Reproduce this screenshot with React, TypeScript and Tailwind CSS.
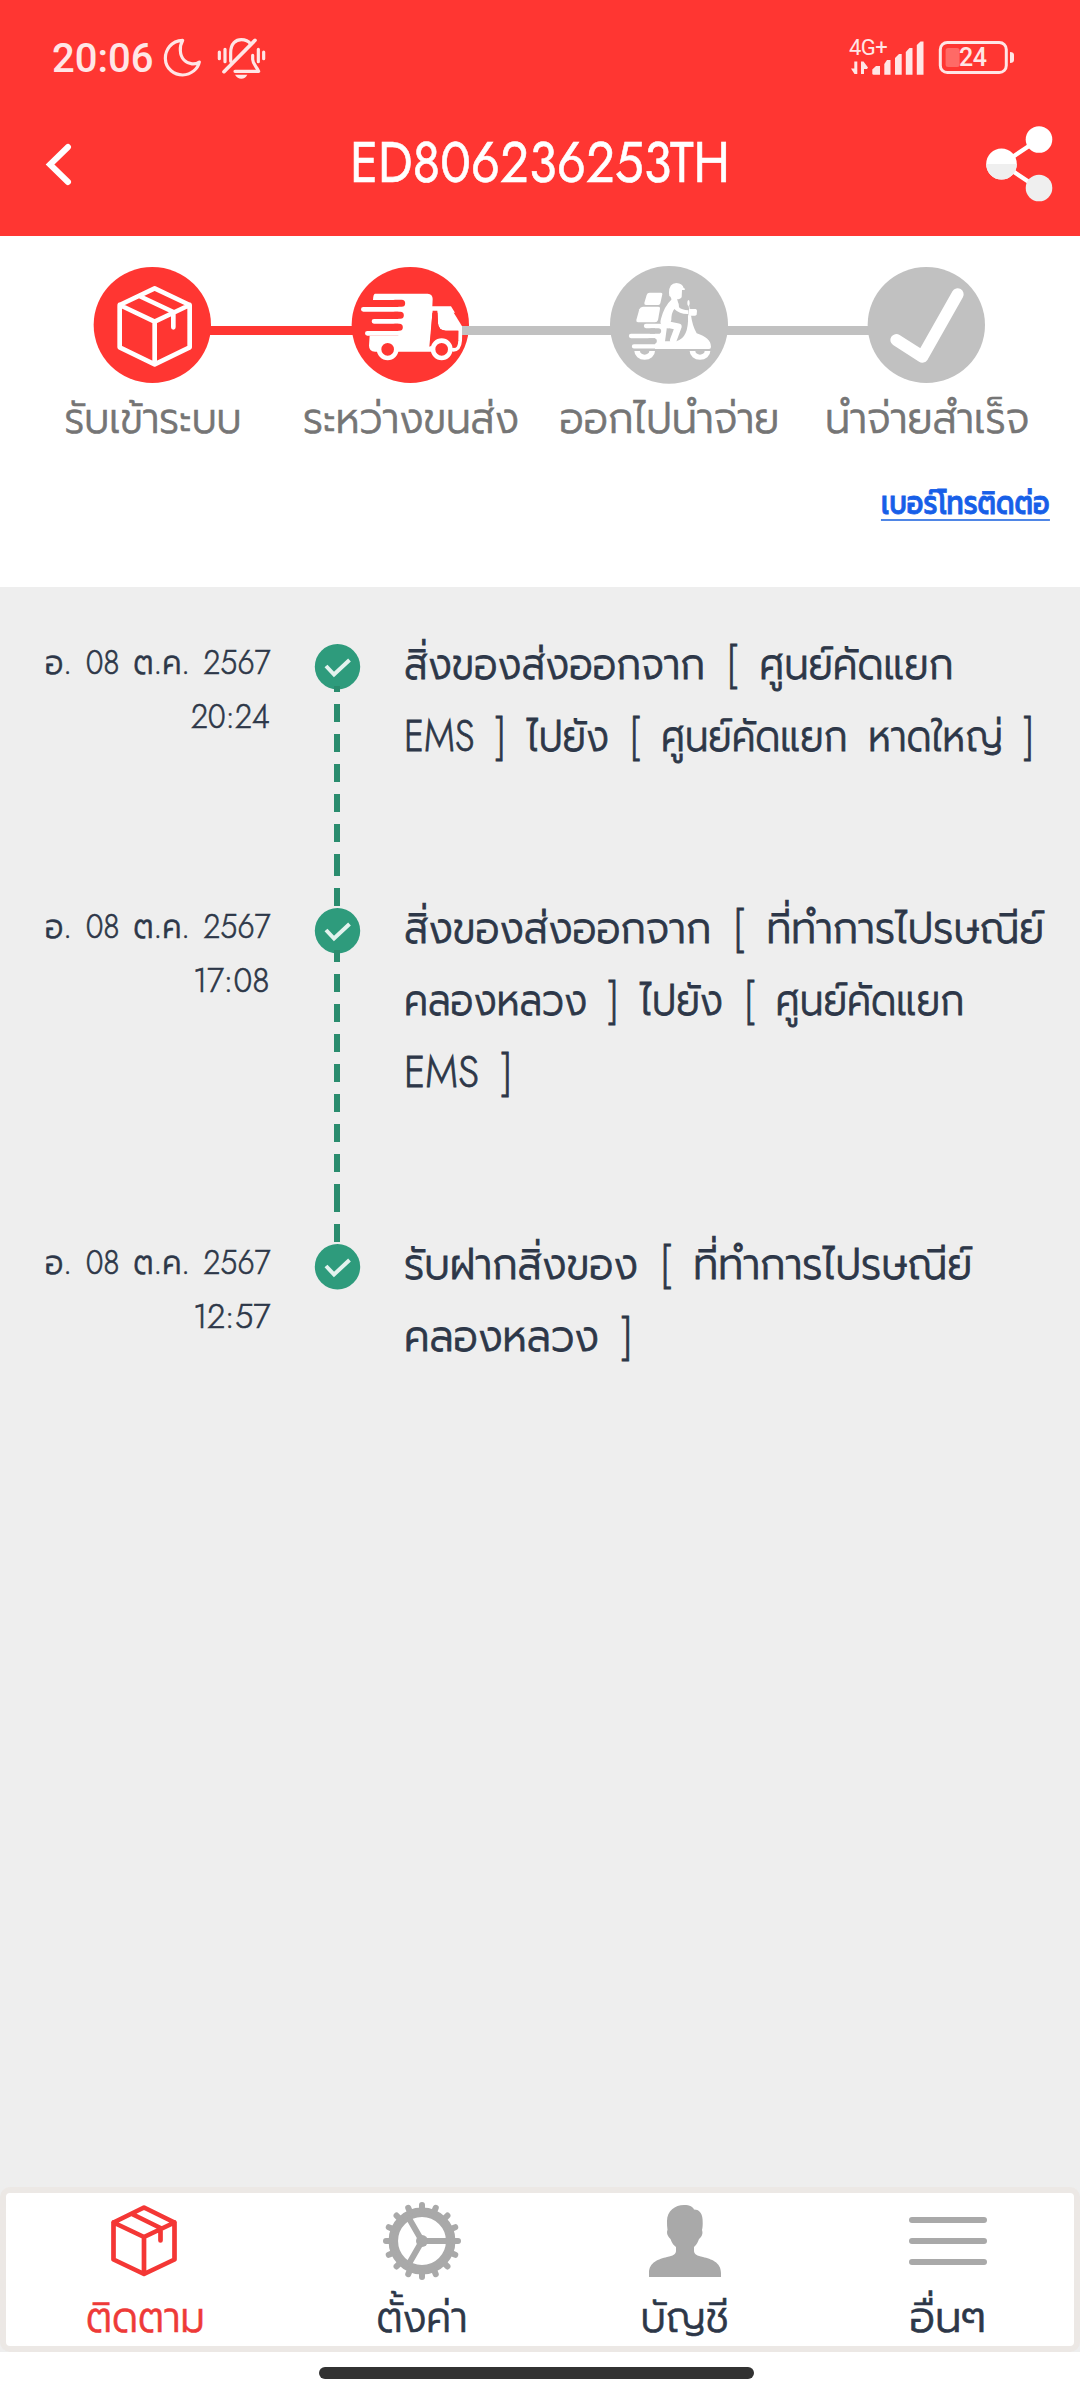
import { useLayoutEffect, useRef, useState, type ReactNode } from 'react'
import { clsx } from 'clsx'

const font = "font-['Jost','Prompt','Lato','Noto_Sans',sans-serif]"

type Align = 'left' | 'center' | 'right'

// Squeezes or stretches one line of text to the given width.
function Fit({ width, align = 'center', className, children }: {
  width: number
  align?: Align
  className?: string
  children: ReactNode
}) {
  const ref = useRef<HTMLSpanElement>(null)
  const [scale, setScale] = useState(1)

  useLayoutEffect(() => {
    if (ref.current) setScale(width / ref.current.offsetWidth)
  }, [width])

  return (
    <span
      ref={ref}
      className={clsx(
        'inline-block whitespace-nowrap',
        align === 'left' && 'origin-left',
        align === 'center' && 'origin-center',
        align === 'right' && 'origin-right',
        className,
      )}
      style={{ transform: `scaleX(${scale})` }}>
      {children}
    </span>
  )
}

function StatusIcons() {
  return (
    <svg viewBox="0 0 390 180" className="mt-[30px] h-[60px] w-[130px]" fill="none" stroke="#ffe6e6" strokeWidth="9.500" strokeLinecap="round" strokeLinejoin="round">
      <path d="M98 31C62 32 46 62 46 85C47 118 74 135 98 135C124 134 144 116 148 96C136 105 116 104 102 90C88 76 88 48 98 31Z" />
      <path d="M222 125L315 31" strokeWidth="11" />
      <path d="M242 94V68C242 40 258 29 274 29C287 29 296 34 302 42" />
      <path d="M308 76V88C309 104 320 110 326 124H255" />
      <path d="M255 134H292Q286 146 274 146Q262 146 255 134Z" fill="#ffe6e6" stroke="none" />
      <path d="M208 66V86M225 58V95M325 58V95M341 66V86" />
    </svg>
  )
}

function SignalAndBattery() {
  return (
    <div className="relative mt-[30px] h-[60px] w-[175px] font-['Roboto',sans-serif] text-[#ffe6e6]">
      <svg viewBox="0 0 175 60" className="h-[60px] w-[175px]" fill="#ffe6e6">
        <path d="M12.3 31.5v12.5h-2.8l-3.500-5.500h3.300v-7z" />
        <path d="M16 31.500h2.500l4.500 6-1 1.500h-3v5h-3z" />
        <path d="M27.300 39.500L31 36h4v8.700h-6.200q-1.500 0-1.500-1.500z" />
        <path d="M39.300 34L42 30h3.500v14.700h-6.200z" />
        <path d="M50 28L54 24h2.700v20.700H50z" />
        <path d="M60.800 22L64.500 18h3v26.700h-6.700z" />
        <path d="M71.800 15L75.500 11.500h3v33.200h-6.700z" />
        <rect x="95.300" y="12.500" width="66" height="30" rx="7" fill="none" stroke="#ffe6e6" strokeWidth="3" />
        <rect x="100.600" y="18" width="14" height="19" rx="2.500" fill="#ff6a66" />
        <path d="M165 22q4 0 4 3v5q0 3-4 3z" />
      </svg>
      <span className="absolute top-[6px] left-[4px] text-[22px] leading-[24px] tracking-[-0.5px]">4G+</span>
      <span className="absolute top-[15px] left-[114px] text-[25px] leading-[26px] font-medium tracking-[-0.5px]">24</span>
    </div>
  )
}

function Share() {
  return (
    <svg viewBox="0 0 70 80" className="h-[80px] w-[70px]">
      <defs>
        <clipPath id="lower"><rect x="0" y="40" width="70" height="40" /></clipPath>
      </defs>
      <path d="M18 40L54 16M18 40L54 64" stroke="#fff" strokeWidth="4.500" />
      <g fill="#fff">
        <ellipse cx="17.500" cy="40" rx="15.300" ry="15.500" />
        <circle cx="55" cy="15.500" r="13.300" />
      </g>
      <g fill="#efefef" clipPath="url(#lower)">
        <ellipse cx="17.500" cy="40" rx="15.300" ry="15.500" />
        <circle cx="55" cy="64" r="13.300" />
      </g>
    </svg>
  )
}

function Header() {
  return (
    <header className="h-[236px] bg-[#ff3632]">
      <div className="flex h-[117px] items-start">
        <span className="ml-[52px] w-[98px] pt-[38px] font-['Roboto',sans-serif] text-[40px] leading-[42px] font-medium whitespace-nowrap text-[#ffe6e6]">20:06</span>
        <StatusIcons />
        <div className="flex-1" />
        <SignalAndBattery />
        <div className="w-[60px]" />
      </div>
      <div className="grid h-[93px] grid-cols-[1fr_auto_1fr] items-center">
        <svg viewBox="0 0 30 44" className="ml-[44px] h-[44px] w-[30px]" fill="none" stroke="#fff" strokeWidth="6" strokeLinecap="round">
          <path d="M24 5L6 22.500L24 40" />
        </svg>
        <Fit width={380} className={clsx(font, 'pb-[4px] text-[57px] leading-[60px] text-white [-webkit-text-stroke:0.6px]')}>ED806236253TH</Fit>
        <div className="mr-[26px] flex justify-end"><Share /></div>
      </div>
    </header>
  )
}

const boxPath = 'M200 85L305 135V262L200 313L95 262V135ZM95 135L200 185L305 135M200 185V313M154 108L256 156V202'

function ParcelStep() {
  return (
    <svg viewBox="0 0 390 390" className="size-[130px]">
      <ellipse cx="193" cy="195" rx="176" ry="174" fill="#ff3632" />
      <path d={boxPath} fill="none" stroke="#fff" strokeWidth="14" strokeLinejoin="round" strokeLinecap="round" />
    </svg>
  )
}

function TruckStep() {
  return (
    <svg viewBox="3 0 390 390" className="size-[130px]">
      <ellipse cx="196" cy="195" rx="176" ry="174" fill="#ff3632" />
      <g fill="#fff">
        <path d="M90 101H248Q263 102 263 117L262 139H318L330 158H262L256 250Q258 262 262 262V275H90Q72 273 72 257L74 227H160V120H84Q85 101 90 101Z" />
        <path d="M277 145H318L352 200V212H302Q280 211 279 190Z" />
      </g>
      <g fill="none" stroke="#fff" strokeLinecap="round">
        <path d="M55 148H165M87 184H165M67 220H165" strokeWidth="14" />
        <path d="M346 205L345 242Q343 269 325 269" strokeWidth="12" />
      </g>
      <path d="M150 130H170M150 165.500H166M150 201.500H163" stroke="#ff3632" strokeWidth="21" strokeLinecap="round" />
      <path d="M263 152H277L279 190Q280 211 302 212H340V240Q339 262 330 264L322 262A33 33 0 0 0 258 258L253 260Z" fill="#ff3632" />
      <g fill="#ff3632" stroke="#fff" strokeWidth="14">
        <circle cx="128" cy="268" r="26" />
        <circle cx="290" cy="268" r="26" />
      </g>
    </svg>
  )
}

function RiderStep() {
  return (
    <svg viewBox="-3 0 390 390" className="size-[130px]">
      <ellipse cx="192" cy="194.500" rx="177" ry="176.500" fill="#c1c1c1" />
      <g fill="#fff">
        <path d="M192 98Q192 70 214 69Q233 70 236 84L240 86L239 90H231L230 112Q226 119 217 117V126H199Q201 112 193 108Z" />
        <path d="M134 98H168Q173 98 172 103L166 130Q165 135 160 135H123Q117 135 118 129L125 105Q127 98 134 98Z" />
        <path d="M114 140H160Q166 140 165 146L159 180Q157 187 150 187H99Q93 187 94 180L103 148Q106 140 114 140Z" />
        <path d="M199 119H216Q222 130 222 142Q230 150 250 151V162Q224 163 208 147Q199 158 199 180L190 206L170 196Q164 190 168 176Q178 138 199 119Z" />
        <path d="M252 147H272Q276 148 276 153L275 163Q274 167 270 167H250Z" />
        <ellipse cx="250.500" cy="129" rx="3.500" ry="9" />
        <path d="M160 192L186 200L180 244H214Q252 234 249 166H258Q262 198 275 220Q317 233 318 260Q318 267 312 267H150V192Z" />
        <path d="M88 273A31 26 0 0 0 150 273H133A14 11 0 0 1 105 273Z" />
        <path d="M254 273A31 26 0 0 0 316 273H299A14 11 0 0 1 271 273Z" />
      </g>
      <g fill="none" stroke="#fff" strokeLinecap="round" strokeLinejoin="round">
        <path d="M180 192L220 200L205 240" strokeWidth="20" />
        <path d="M123 198H165M78 228H165M87 259H165" strokeWidth="13" />
        <path d="M251 136L255 150" strokeWidth="2" />
      </g>
      <path d="M140 213H160M135 243H147" stroke="#c1c1c1" strokeWidth="17" strokeLinecap="round" />
    </svg>
  )
}

function DoneStep() {
  return (
    <svg viewBox="0 0 390 390" className="size-[130px]">
      <ellipse cx="193" cy="195" rx="176" ry="174" fill="#c1c1c1" />
      <path d="M103 240L181 290L287 103" fill="none" stroke="#fff" strokeWidth="36" strokeLinecap="round" strokeLinejoin="round" />
    </svg>
  )
}

const steps = [
  { label: 'รับเข้าระบบ', width: 177, icon: <ParcelStep />, line: 'bg-[#ff3632]' },
  { label: 'ระหว่างขนส่ง', width: 216, icon: <TruckStep />, line: 'bg-[#c1c1c1]' },
  { label: 'ออกไปนำจ่าย', width: 220, icon: <RiderStep />, line: 'bg-[#c1c1c1]' },
  { label: 'นำจ่ายสำเร็จ', width: 204, icon: <DoneStep />, line: null },
]

function Progress() {
  return (
    <section className="h-[351px] bg-white">
      <div className="flex px-6 pt-6">
        {steps.map(s => (
          <div key={s.label} className="relative flex w-[258px] flex-col items-center">
            <div className="relative">{s.icon}</div>
            {s.line && <div className={clsx('absolute top-[66px] left-[180px] h-[9px] w-[207px]', s.line)} />}
            <Fit width={s.width} className={clsx(font, 'text-[43px] leading-[57px] font-light text-[#757575] [-webkit-text-stroke:0.7px]')}>{s.label}</Fit>
          </div>
        ))}
      </div>
      <div className="mt-[40px] flex justify-end pr-[30px]">
        <Fit width={169} align="right" className={clsx(font, 'border-b-2 border-[#4f86e6] text-[32px] leading-[32px] font-medium text-[#175fe8] [-webkit-text-stroke:0.8px]')}>
          เบอร์โทรติดต่อ
        </Fit>
      </div>
    </section>
  )
}

const events = [
  {
    date: 'อ. 08 ต.ค. 2567',
    time: '20:24',
    row: 'h-[264px]',
    lines: [
      { text: 'สิ่งของส่งออกจาก [ ศูนย์คัดแยก', width: 549 },
      { text: 'EMS ] ไปยัง [ ศูนย์คัดแยก หาดใหญ่ ]', width: 630 },
    ],
    dashes: ['h-[6px]', 'h-[18px]', 'h-[18px]', 'h-[18px]', 'h-[18px]', 'h-[18px]', 'h-[22px]', 'h-[18px]'],
  },
  {
    date: 'อ. 08 ต.ค. 2567',
    time: '17:08',
    row: 'h-[336px]',
    lines: [
      { text: 'สิ่งของส่งออกจาก [ ที่ทำการไปรษณีย์', width: 640 },
      { text: 'คลองหลวง ] ไปยัง [ ศูนย์คัดแยก', width: 560 },
      { text: 'EMS ]', width: 108 },
    ],
    dashes: ['h-[12px]', 'h-[18px]', 'h-[18px]', 'h-[18px]', 'h-[18px]', 'h-[18px]', 'h-[18px]', 'h-[18px]', 'h-[28px]', 'h-[18px]'],
  },
  {
    date: 'อ. 08 ต.ค. 2567',
    time: '12:57',
    row: 'h-[336px]',
    lines: [
      { text: 'รับฝากสิ่งของ [ ที่ทำการไปรษณีย์', width: 568 },
      { text: 'คลองหลวง ]', width: 229 },
    ],
    dashes: [],
  },
]

function Timeline() {
  return (
    <section className="h-[1600px] bg-[#eeeeee] pt-[57px]">
      {events.map(e => (
        <div key={e.time} className={clsx('flex items-start text-[#2d3748]', font, e.row)}>
          <div className="-mt-[8px] flex w-[270px] shrink-0 flex-col items-end text-[34px] leading-[54px] font-light [-webkit-text-stroke:0.6px]">
            <Fit width={225} align="right" className="[word-spacing:5px]">{e.date}</Fit>
            <Fit width={e.time === '20:24' ? 79 : 77} align="right">{e.time}</Fit>
          </div>
          <div className="relative ml-[44px] h-[46px] w-[47px] shrink-0">
            <svg viewBox="0 0 47 46" className="h-[46px] w-[47px]">
              <circle cx="23.500" cy="22.700" r="22.700" fill="#2e9b7c" />
              <path d="M12 22L20 30.500L35.500 16" fill="none" stroke="#e3f2ee" strokeWidth="4" />
            </svg>
            <div className="absolute top-[42px] left-[20px] flex flex-col gap-[12px]">
              {e.dashes.map((h, i) => (
                <div key={i} className={clsx('w-[6px] bg-[#2a8c6e]', h)} />
              ))}
            </div>
          </div>
          <div className="-mt-[16px] ml-[43px] flex shrink-0 flex-col items-start text-[44px] leading-[72px]">
            {e.lines.map(l => (
              <Fit key={l.text} width={l.width} align="left" className="font-light [word-spacing:11px] [-webkit-text-stroke:0.8px]">{l.text}</Fit>
            ))}
          </div>
        </div>
      ))}
    </section>
  )
}

const teeth = Array.from({ length: 16 }, (_, i) => i * 22.5)

function Gear() {
  return (
    <svg viewBox="-40 -40 80 80" className="size-[80px]" fill="none" stroke="#a9a9a9">
      <circle r="28.700" strokeWidth="9.500" />
      {teeth.map(a => (
        <path key={a} d="M31 0H36" strokeWidth="6" strokeLinecap="round" transform={`rotate(${a})`} />
      ))}
      <path d="M0 0H27M0 0L-13.500 -23.400M0 0L-13.500 23.400" strokeWidth="6" />
      <circle r="6" fill="#a9a9a9" stroke="none" />
    </svg>
  )
}

function Parcel() {
  return (
    <svg viewBox="0 0 66 72" className="mr-[2px] h-[72px] w-[66px]" fill="none" stroke="#f43735" strokeWidth="4.700" strokeLinecap="round" strokeLinejoin="round">
      <path d="M33 2.500L63.500 17.500V54.500L33 69L2.500 54.500V17.500ZM2.500 17.500L33 32L63.500 17.500M33 32V69M21 9L49.500 23V35.500" />
    </svg>
  )
}

function Person() {
  return (
    <svg viewBox="0 0 72 72" className="size-[72px]" fill="#a9a9a9">
      <path d="M0 72V68C0 57 10 54 18 52C24 51 27 49 27 46V42C23 39 22 35 21.500 34C18 31 17.500 27 18.500 25C18 22 18 19 18 16C18 6 26 0 35 0C41 0 44 2 45 4.500C51 4.500 54 9 53.700 18C53.700 21 53.500 23 53 25C54 28 53.500 31 50 34C49 37 48 39 45 42V46C45 49 48 51 54 52C62 54 72 57 72 68V72Z" />
    </svg>
  )
}

function Menu() {
  return (
    <div className="flex flex-col gap-[15px]">
      <div className="h-[6px] w-[78px] rounded-full bg-[#a9a9a9]" />
      <div className="h-[6px] w-[78px] rounded-full bg-[#a9a9a9]" />
      <div className="h-[6px] w-[78px] rounded-full bg-[#a9a9a9]" />
    </div>
  )
}

const tabs = [
  { label: 'ติดตาม', width: 119, icon: <Parcel />, cell: 'text-[#ee3a38]' },
  { label: 'ตั้งค่า', width: 91, icon: <Gear />, cell: 'text-[#2d3748]' },
  { label: 'บัญชี', width: 88, icon: <Person />, cell: 'text-[#2d3748]' },
  { label: 'อื่นๆ', width: 77, icon: <Menu />, cell: 'pl-[11px] text-[#2d3748]' },
]

function TabBar() {
  return (
    <div className="bg-[#eeeeee]">
      <nav className="grid h-[165px] grid-cols-[278px_276px_250px_264px] rounded-[10px] border-[6px] border-[#ece8e5] bg-white">
        {tabs.map(t => (
          <div key={t.label} className={clsx('flex flex-col items-center', t.cell)}>
            <div className="flex h-[96px] items-center">{t.icon}</div>
            <Fit width={t.width} className={clsx(font, 'text-[43px] leading-[57px] font-light [-webkit-text-stroke:0.7px]')}>{t.label}</Fit>
          </div>
        ))}
      </nav>
    </div>
  )
}

export default function App() {
  return (
    <div className="h-[2400px] w-[1080px] overflow-hidden bg-white">
      <Header />
      <Progress />
      <Timeline />
      <TabBar />
      <div className="mt-[15px] ml-[319px] h-[12px] w-[435px] rounded-full bg-[#323232]" />
    </div>
  )
}
